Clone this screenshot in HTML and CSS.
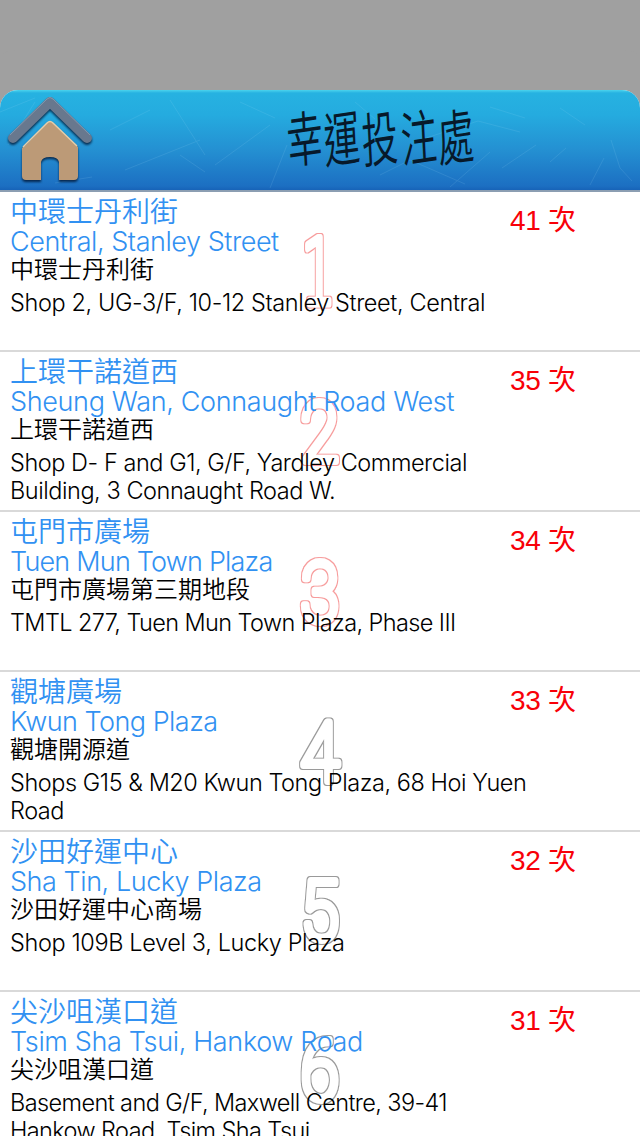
FILE: index.html
```html
<!DOCTYPE html>
<html lang="zh-Hant">
<head>
    <meta charset="UTF-8">
    <meta name="viewport" content="width=device-width, initial-scale=1.0">
    <title>幸運投注處</title>
    <link rel="stylesheet" href="styles.css">
</head>
<body>
    <svg class="defs" width="0" height="0" aria-hidden="true">
        <filter id="outline-red">
            <feMorphology in="SourceAlpha" operator="dilate" radius="1"/>
            <feGaussianBlur stdDeviation="0.4" result="big"/>
            <feFlood flood-color="#f79c9c"/>
            <feComposite in2="big" operator="in"/>
            <feMerge><feMergeNode/><feMergeNode in="SourceGraphic"/></feMerge>
        </filter>
        <filter id="outline-gray">
            <feMorphology in="SourceAlpha" operator="dilate" radius="1"/>
            <feGaussianBlur stdDeviation="0.4" result="big"/>
            <feFlood flood-color="#9a9a9a"/>
            <feComposite in2="big" operator="in"/>
            <feMerge><feMergeNode/><feMergeNode in="SourceGraphic"/></feMerge>
        </filter>
    </svg>
    <div class="top-space"></div>
    <header class="header">
        <svg class="scratches" viewBox="0 0 640 100" fill="none" stroke="#a5dcf5" aria-hidden="true">
            <path d="M0 22L35 8M8 55L35 12M110 40L150 20M125 80L200 50M170 10L205 65M215 75L270 35M240 12L275 28"/>
            <path d="M270 98L287 55M380 85L410 70L465 94M420 50L478 31L520 42M450 97L490 62M502 78L536 55M611 50L620 78L632 91"/>
            <path d="M355 12L375 29M490 17L525 28M560 18L585 35M590 95L604 68M55 93L92 87M180 65L205 82M550 72L566 58"/>
        </svg>
        <a class="home" href="#">
            <svg width="100" height="100" viewBox="0 0 100 100">
                <path class="roof" d="M13 48L50 12L87 48"/>
                <path class="roof-light" d="M10 45L47 9Q50 6 53 9L90 45"/>
                <path class="house" d="M26 55L47 33Q50 30 53 33L78 57V86Q78 90 74 90H59V72Q58 67 50 67Q42 67 41 72V90H26Q22 90 22 86V58Z"/>
                <path class="edge" d="M23 57L47 33Q50 30 53 33L77 56"/>
            </svg>
        </a>
        <h1>
            <svg width="220" height="100" viewBox="0 0 220 100">
                <text transform="scale(1 1.65)" x="18 55 93 132 169" y="44.5 44.5 44.5 44 43.5" rotate="-5">幸運投注處</text>
            </svg>
        </h1>
    </header>

    <main class="list">
        <section class="shop">
            <svg class="rank red one" viewBox="0 0 80 100"><text x="64" y="82">1</text></svg>
            <div class="info">
                <h2>中環士丹利街</h2>
                <h3 class="n1">Central, Stanley Street</h3>
                <p class="place">中環士丹利街</p>
                <p class="address a1">Shop 2, UG-3/F, 10-12 Stanley Street, Central</p>
            </div>
            <div class="count">41 次</div>
        </section>
        <section class="shop">
            <svg class="rank red" viewBox="0 0 80 100"><text x="47" y="79">2</text></svg>
            <div class="info">
                <h2>上環干諾道西</h2>
                <h3 class="n2">Sheung Wan, Connaught Road West</h3>
                <p class="place">上環干諾道西</p>
                <p class="address a2">Shop D- F and G1, G/F, Yardley Commercial<br>Building, 3 Connaught Road W.</p>
            </div>
            <div class="count">35 次</div>
        </section>
        <section class="shop">
            <svg class="rank red" viewBox="0 0 80 100"><text x="47" y="79">3</text></svg>
            <div class="info">
                <h2>屯門市廣場</h2>
                <h3 class="n3">Tuen Mun Town Plaza</h3>
                <p class="place">屯門市廣場第三期地段</p>
                <p class="address a3">TMTL 277, Tuen Mun Town Plaza, Phase III</p>
            </div>
            <div class="count">34 次</div>
        </section>
        <section class="shop">
            <svg class="rank" viewBox="0 0 80 100"><text x="47" y="79">4</text></svg>
            <div class="info">
                <h2>觀塘廣場</h2>
                <h3 class="n4">Kwun Tong Plaza</h3>
                <p class="place">觀塘開源道</p>
                <p class="address a4">Shops G15 &amp; M20 Kwun Tong Plaza, 68 Hoi Yuen<br>Road</p>
            </div>
            <div class="count">33 次</div>
        </section>
        <section class="shop">
            <svg class="rank" viewBox="0 0 80 100"><text x="47" y="77">5</text></svg>
            <div class="info">
                <h2>沙田好運中心</h2>
                <h3 class="n5">Sha Tin, Lucky Plaza</h3>
                <p class="place">沙田好運中心商場</p>
                <p class="address a5">Shop 109B Level 3, Lucky Plaza</p>
            </div>
            <div class="count">32 次</div>
        </section>
        <section class="shop">
            <svg class="rank" viewBox="0 0 80 100"><text x="47" y="77">6</text></svg>
            <div class="info">
                <h2>尖沙咀漢口道</h2>
                <h3 class="n6">Tsim Sha Tsui, Hankow Road</h3>
                <p class="place">尖沙咀漢口道</p>
                <p class="address a6">Basement and G/F, Maxwell Centre, 39-41<br>Hankow Road, Tsim Sha Tsui</p>
            </div>
            <div class="count">31 次</div>
        </section>
    </main>
</body>
</html>
```
FILE: styles.css
```css
* {
    box-sizing: border-box;
}
body {
    margin: 0;
    height: 1136px;
    overflow: hidden;
    background-color: #fff;
    font-family: Inter, "Liberation Sans", "Noto Sans CJK TC", sans-serif;
    font-weight: 300;
}
h1, h2, h3, p {
    margin: 0;
    font-weight: 300;
    white-space: nowrap;
}
.defs {
    position: absolute;
}
.top-space {
    height: 90px;
    background-color: #a0a0a0;
}
.header {
    position: relative;
    display: flex;
    height: 100px;
    background: linear-gradient(#4bd3ed 0, #26b2e1 3px, #25abdf 25%, #2490d2 60%, #1c6fc2 96%, #1763b8 100%);
    border-radius: 18px 18px 0 0;
    box-shadow: 0 -20px 0 20px #a0a0a0;
}
.scratches {
    position: absolute;
    inset: 0;
    opacity: 0.13;
}
.home {
    position: relative;
    height: 100px;
}
.home svg {
    display: block;
    filter: drop-shadow(0 2px 1px rgba(0, 20, 50, 0.8));
}
.roof {
    fill: none;
    stroke: #68788e;
    stroke-width: 10;
    stroke-linecap: round;
    stroke-linejoin: round;
}
.roof-light {
    fill: none;
    stroke: #8497ad;
    stroke-width: 1;
}
.house {
    fill: #bc9a77;
}
.edge {
    fill: none;
    stroke: #e6cda9;
    stroke-width: 1.5;
}
.header h1 {
    position: relative;
    margin-left: 170px;
    font: 350 36px "Noto Sans CJK TC", sans-serif;
}
.header h1 svg {
    display: block;
    fill: #07192a;
}
.list {
    border-top: 2px solid #8c9eb2;
}
.shop {
    position: relative;
    display: flex;
    height: 160px;
    padding: 3px 0 0 10px;
    border-bottom: 2px solid #d9d9d9;
}
.info {
    position: relative;
    width: 500px;
}
h2, .place {
    font-family: "Noto Sans CJK TC", sans-serif;
    font-weight: 350;
}
h2 {
    margin-top: -1px;
    color: #3191f2;
    font-size: 28px;
    line-height: 32px;
}
h3 {
    margin-top: 1px;
    color: #3191f2;
    font-size: 27px;
    line-height: 30px;
}
.n1, .n5 {
    letter-spacing: -0.45px;
}
.n2, .n6 {
    letter-spacing: -0.35px;
}
.n3 {
    letter-spacing: -0.79px;
}
.n4 {
    letter-spacing: -0.53px;
}
.place {
    margin-top: -3px;
    font-size: 24px;
    line-height: 28px;
}
.address {
    margin-top: 7px;
    font-size: 23.5px;
    line-height: 28px;
}
.a1, .a5 {
    letter-spacing: -0.38px;
}
.a2, .a4 {
    letter-spacing: -0.45px;
}
.a3, .a6 {
    letter-spacing: -0.6px;
}
.count {
    padding-top: 3px;
    color: #f80008;
    letter-spacing: -0.3px;
    font: 400 28px/46px "Liberation Sans", "Noto Sans CJK TC", sans-serif;
}

/* hollow number behind the text */
.rank {
    position: absolute;
    top: 30px;
    left: 280px;
    width: 80px;
    height: 100px;
    filter: url(#outline-gray);
}
.rank.red {
    filter: url(#outline-red);
}
.rank text {
    fill: #fff;
    stroke: #fff;
    stroke-width: 8px;
    stroke-linejoin: round;
    text-anchor: middle;
    font: 100 82px Roboto, sans-serif;
    transform: scaleX(0.85);
}
.rank.one text {
    stroke-width: 7px;
    font: 200 90px "DejaVu Sans", sans-serif;
    transform: scaleX(0.6);
}
```
